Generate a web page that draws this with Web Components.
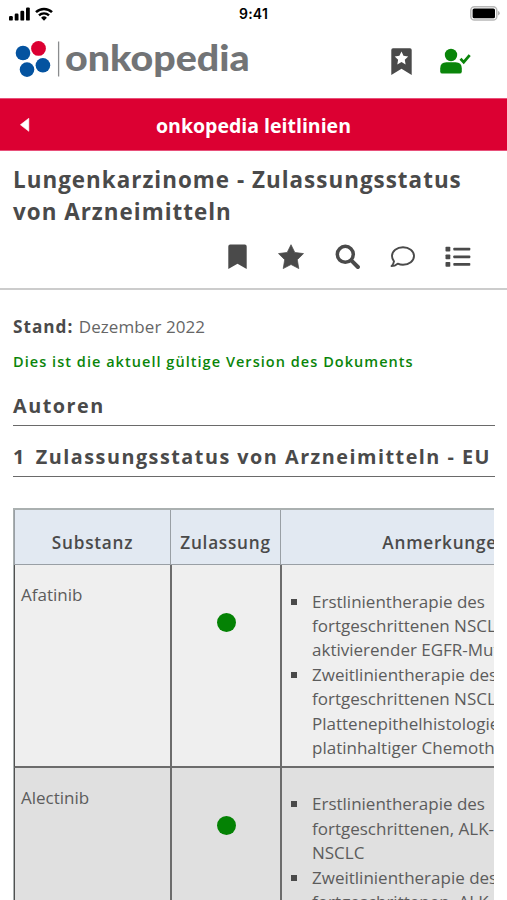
<!DOCTYPE html>
<html lang="de">
<head>
<meta charset="utf-8">
<title>Onkopedia Leitlinien</title>
<style>
  html, body { margin: 0; height: 900px; overflow: hidden; background: #fff; }
  body { font-family: "Open Sans", "Noto Sans", sans-serif; color: #4a4a4a; }
</style>
</head>
<body>
<onko-app>
  <status-bar slot="top" time="9:41"></status-bar>
  <app-header slot="top">onkopedia</app-header>
  <nav-bar slot="top">onkopedia leitlinien</nav-bar>
  <doc-title slot="top">Lungenkarzinome - Zulassungsstatus<br>von Arzneimitteln</doc-title>

  <doc-meta label="Stand:" value="Dezember 2022">Dies ist die aktuell gültige Version des Dokuments</doc-meta>
  <doc-section>Autoren</doc-section>
  <doc-section class="second" number="1">Zulassungsstatus von Arzneimitteln - EU</doc-section>
  <drug-table>
    <drug-row name="Afatinib">
      <li>Erstlinientherapie des<br>fortgeschrittenen NSCLC mit<br>aktivierender EGFR-Mutation</li>
      <li>Zweitlinientherapie des<br>fortgeschrittenen NSCLC mit<br>Plattenepithelhistologie nach<br>platinhaltiger Chemotherapie</li>
    </drug-row>
    <drug-row name="Alectinib" shade>
      <li>Erstlinientherapie des<br>fortgeschrittenen, ALK-positiven<br>NSCLC</li>
      <li>Zweitlinientherapie des<br>fortgeschrittenen, ALK-positiven<br>NSCLC</li>
    </drug-row>
  </drug-table>
</onko-app>

<script>
// small base class: every element only supplies its template
class OnkoElement extends HTMLElement {
  constructor() {
    super();
    const tpl = document.createElement('template');
    tpl.innerHTML = this.template();
    this.attachShadow({ mode: 'open' }).appendChild(tpl.content.cloneNode(true));
  }
}

class OnkoApp extends OnkoElement {
  template() {
    return `
      <style>
        :host { display: flex; flex-direction: column; width: 507px; height: 900px; overflow: hidden; }
        main { flex: 1; min-height: 0; padding: 24px 12px 0 13px; overflow: hidden; }
      </style>
      <slot name="top"></slot>
      <main><slot></slot></main>
    `;
  }
}

class StatusBar extends OnkoElement {
  template() {
    return `
      <style>
        :host { display: grid; grid-template-columns: 1fr auto 1fr; align-items: center; height: 28px; flex: none;
                padding: 0 7px 0 9px; box-sizing: border-box; font: 600 14px/28px Inter, sans-serif; color: #000;
                letter-spacing: .2px; }
        .left { display: flex; gap: 5px; align-items: center; margin-top: -1px; }
        .battery { justify-self: end; margin-top: -1px; }
        span { margin-left: -2px; }
        svg { display: block; }
      </style>
      <div class="left">
        <svg width="21" height="14" viewBox="0 0 21 14">
          <rect x="0" y="9" width="3.8" height="4.6" rx="1.2"/>
          <rect x="5.7" y="6.5" width="3.8" height="7.1" rx="1.2"/>
          <rect x="11.4" y="3.7" width="3.8" height="9.9" rx="1.2"/>
          <rect x="17" y=".4" width="3.8" height="13.2" rx="1.2"/>
        </svg>
        <svg width="18" height="14" viewBox="0 0 18 14">
          <path d="M1 5.2a11.5 11.5 0 0 1 16 0" fill="none" stroke="#000" stroke-width="2.5"/>
          <path d="M4 8.4a7.2 7.2 0 0 1 10 0" fill="none" stroke="#000" stroke-width="2.4"/>
          <path d="M6.1 10.7a4.2 4.2 0 0 1 5.8 0L9 13.7z"/>
        </svg>
      </div>
      <span></span>
      <svg class="battery" width="30" height="15" viewBox="0 0 30 15">
        <rect x=".8" y=".8" width="26" height="13.2" rx="3.6" fill="#fff" stroke="#b8b8b8" stroke-width="1.5"/>
        <rect x="2.6" y="2.5" width="22.4" height="9.8" rx="1.6"/>
        <path d="M28 5v4.4q1.8-.6 1.8-2.2T28 5z" fill="#b4b4b4"/>
      </svg>
    `;
  }
  connectedCallback() {
    this.shadowRoot.querySelector('span').textContent = this.getAttribute('time');
  }
}

class AppHeader extends OnkoElement {
  template() {
    return `
      <style>
        :host { display: flex; justify-content: space-between; height: 70px; flex: none; box-sizing: border-box;
                padding: 12px 36px 0 15px; }
        .logo { display: flex; }
        .word { font: 900 36.5px/38px Lato, sans-serif; color: #727476; margin: -2px 0 0 5px;
                transform: scaleX(1.078); transform-origin: 0 50%; white-space: nowrap; }
        .icons { display: flex; gap: 28px; padding-top: 8px; }
        svg { display: block; flex: none; }
      </style>
      <div class="logo">
        <svg width="45" height="38" viewBox="0 0 45 38">
          <g fill="#0453a0">
            <circle cx="8" cy="13" r="7.3"/><circle cx="27.9" cy="25.3" r="7.3"/><circle cx="12" cy="29.6" r="7.3"/>
          </g>
          <circle cx="23.5" cy="8.4" r="7.4" fill="#dc0032"/>
          <path d="M43.6 1.5v35" stroke="#8a8c8e" stroke-width="1.3"/>
        </svg>
        <div class="word"><slot></slot></div>
      </div>
      <div class="icons">
        <svg width="21" height="28" viewBox="0 0 21 28">
          <path d="M2 .3h17q1.7 0 1.7 1.7v25L10.5 20.8.3 27V2Q.3.3 2 .3z" fill="#4a4a4a"/>
          <path d="M10.5 3.5l2 4.3 4.7.6-3.4 3.3.8 4.7-4.1-2.3-4.2 2.3.8-4.7-3.4-3.3 4.7-.6z" fill="#fff"/>
        </svg>
        <svg width="31" height="28" viewBox="0 0 31 28">
          <g fill="#0a850a">
            <circle cx="11" cy="7" r="6.2"/>
            <path d="M6.5 14.3h9q6.3 0 6.3 6.2v2.9q0 2.2-2.2 2.2H2.4q-2.2 0-2.2-2.2v-2.9q0-6.2 6.3-6.2z"/>
          </g>
          <path d="M20.5 10.8l3.200 3.300 6-6.900" fill="none" stroke="#0a850a" stroke-width="2.8"/>
        </svg>
      </div>
    `;
  }
}

class NavBar extends OnkoElement {
  template() {
    return `
      <style>
        :host { display: grid; grid-template-columns: 40px 1fr 40px; align-items: center; height: 53px; flex: none;
                box-sizing: border-box; border: solid #e8507a; border-width: 1px 0; background: #dc0032; color: #fff;
                font-weight: 700; font-size: 19.5px; text-align: center; }
        svg { display: block; margin-left: 20px; }
        div { padding-top: 1px; }
      </style>
      <svg width="10" height="15" viewBox="0 0 10 15"><path d="M8.8 1.3v13L.4 7.800z" fill="#fff" stroke="#fff" stroke-width=".6" stroke-linejoin="round"/></svg>
      <div><slot></slot></div>
    `;
  }
}

class DocTitle extends OnkoElement {
  template() {
    return `
      <style>
        :host { display: block; height: 139px; flex: none; box-sizing: border-box; padding: 13px 36px 0 13px;
                border-bottom: 2px solid #ccc; }
        h1 { margin: 0; font-size: 22.4px; line-height: 32px; font-weight: 700; letter-spacing: 1.02px; white-space: nowrap; }
        .tools { display: flex; justify-content: flex-end; align-items: center; height: 28px; margin-top: 15px; }
        svg { display: block; fill: #4a4a4a; }
      </style>
      <h1><slot></slot></h1>
      <div class="tools">
        <svg style="margin-right:31px" width="19" height="26" viewBox="0 0 19 26">
          <path d="M2.2.5h14.600q1.900 0 1.900 1.900V25L9.500 19.800.3 25V2.400Q.3.500 2.200.5z"/>
        </svg>
        <svg style="margin-right:31px" width="26" height="26" viewBox="0 0 26 26">
          <path d="M13 .7l3.800 7.700 8.700 1.200-6.200 6.100 1.500 8.900L13 20.500l-7.800 4.100 1.500-8.900L.5 9.600l8.700-1.200z" stroke="#4a4a4a" stroke-width=".7" stroke-linejoin="round"/>
        </svg>
        <svg style="margin-right:30px" width="25" height="26" viewBox="0 0 25 26">
          <circle cx="10.300" cy="10.300" r="8" fill="none" stroke="#4a4a4a" stroke-width="3.500"/>
          <path d="M16.500 16.600l6.400 6.400" stroke="#4a4a4a" stroke-width="4" stroke-linecap="round"/>
        </svg>
        <svg style="margin-right:30px" width="25" height="24" viewBox="0 0 25 24">
          <path d="M13 2.200c6.100 0 11 3.900 11 8.800s-4.900 8.800-11 8.800c-1.900 0-3.700-.4-5.300-1.100-1.700 1.400-3.900 2.400-6.200 2.400 1.300-1.300 2.200-3 2.500-4.800C2.700 14.800 2 13 2 11c0-4.900 4.900-8.800 11-8.800z" fill="none" stroke="#4a4a4a" stroke-width="1.900" stroke-linejoin="round"/>
        </svg>
        <svg width="26" height="22" viewBox="0 0 26 22">
          <rect x=".5" y=".8" width="4.8" height="4.8" rx=".8"/><rect x=".5" y="8.4" width="4.8" height="4.8" rx=".8"/><rect x=".5" y="16" width="4.8" height="4.8" rx=".8"/>
          <rect x="8.3" y="1.8" width="17" height="2.8" rx=".8"/><rect x="8.3" y="9.4" width="17" height="2.8" rx=".8"/><rect x="8.3" y="17" width="17" height="2.8" rx=".8"/>
        </svg>
      </div>
    `;
  }
}

class DocMeta extends OnkoElement {
  template() {
    return `
      <style>
        :host { display: block; }
        p { margin: 0; white-space: nowrap; }
        .date { font-size: 17px; line-height: 26px; color: #666; }
        b { color: #4a4a4a; letter-spacing: 1px; margin-right: 1px; font-size: 17.2px; }
        span { letter-spacing: .07px; }
        .valid { margin-top: 10px; font-size: 14.5px; line-height: 24px; font-weight: 600; letter-spacing: 1.04px; color: #0a850a; }
      </style>
      <p class="date"><b></b> <span></span></p>
      <p class="valid"><slot></slot></p>
    `;
  }
  connectedCallback() {
    this.shadowRoot.querySelector('b').textContent = this.getAttribute('label');
    this.shadowRoot.querySelector('span').textContent = this.getAttribute('value');
  }
}

class DocSection extends OnkoElement {
  template() {
    return `
      <style>
        :host { display: block; margin-top: 16px; }
        :host(.second) { margin-top: 15px; }
        h2 { margin: 0; height: 35px; font-size: 19.8px; line-height: 31px; font-weight: 700; letter-spacing: 1.5px;
             border-bottom: 1px solid #6a6a6a; white-space: nowrap; }
        .num:not(:empty) { margin-right: 10px; }
      </style>
      <h2><span class="num"></span><slot></slot></h2>
    `;
  }
  connectedCallback() {
    this.shadowRoot.querySelector('.num').textContent = this.getAttribute('number') || '';
  }
}

class DrugTable extends OnkoElement {
  template() {
    return `
      <style>
        :host { display: block; margin-top: 31px; width: 481px; overflow: hidden; border: solid #aab0b0;
                border-width: 2px 0 0 1px; box-sizing: border-box; }
        .head { display: grid; grid-template-columns: 156px 110px 330px; width: 597px; height: 55px;
                box-sizing: border-box; border-bottom: 1px solid #999fa5; border-left: 1px solid #999fa5; background: #e2e9f2; }
        .head div { padding-top: 14px; font-size: 17.2px; line-height: 38px; font-weight: 600; letter-spacing: .75px;
                    text-align: center; border-right: 1px solid #999fa5; box-sizing: border-box; }
      </style>
      <div class="head"><div>Substanz</div><div>Zulassung</div><div>Anmerkungen</div></div>
      <slot></slot>
    `;
  }
}

class DrugRow extends OnkoElement {
  template() {
    return `
      <style>
        :host { display: grid; grid-template-columns: 157px 110px 329px; width: 597px; box-sizing: border-box;
                border-left: 1px solid #505050; border-bottom: 2px solid #6c6c6c; background: #efefef;
                font-size: 17px; line-height: 24.4px; color: #5c5c5c; }
        :host([shade]) { background: #e0e0e0; }
        .name, .state { border-right: 2px solid #6c6c6c; }
        .name { padding: 18px 6px; }
        .state { display: flex; justify-content: center; padding-top: 48px; }
        .dot { width: 19px; height: 19px; border-radius: 50%; background: #048204; }
        ul { margin: 0; padding: 24.5px 0 5.5px 30px; list-style: none; white-space: nowrap; }
        ::slotted(li) { display: block; background: linear-gradient(#4a4a4a, #4a4a4a) 0 9px / 6px 6px no-repeat;
                        margin-left: -21px; padding-left: 21px; }
      </style>
      <div class="name"></div>
      <div class="state"><span class="dot"></span></div>
      <ul><slot></slot></ul>
    `;
  }
  connectedCallback() {
    this.shadowRoot.querySelector('.name').textContent = this.getAttribute('name');
  }
}

customElements.define('onko-app', OnkoApp);
customElements.define('status-bar', StatusBar);
customElements.define('app-header', AppHeader);
customElements.define('nav-bar', NavBar);
customElements.define('doc-title', DocTitle);
customElements.define('doc-meta', DocMeta);
customElements.define('doc-section', DocSection);
customElements.define('drug-table', DrugTable);
customElements.define('drug-row', DrugRow);
</script>
</body>
</html>
